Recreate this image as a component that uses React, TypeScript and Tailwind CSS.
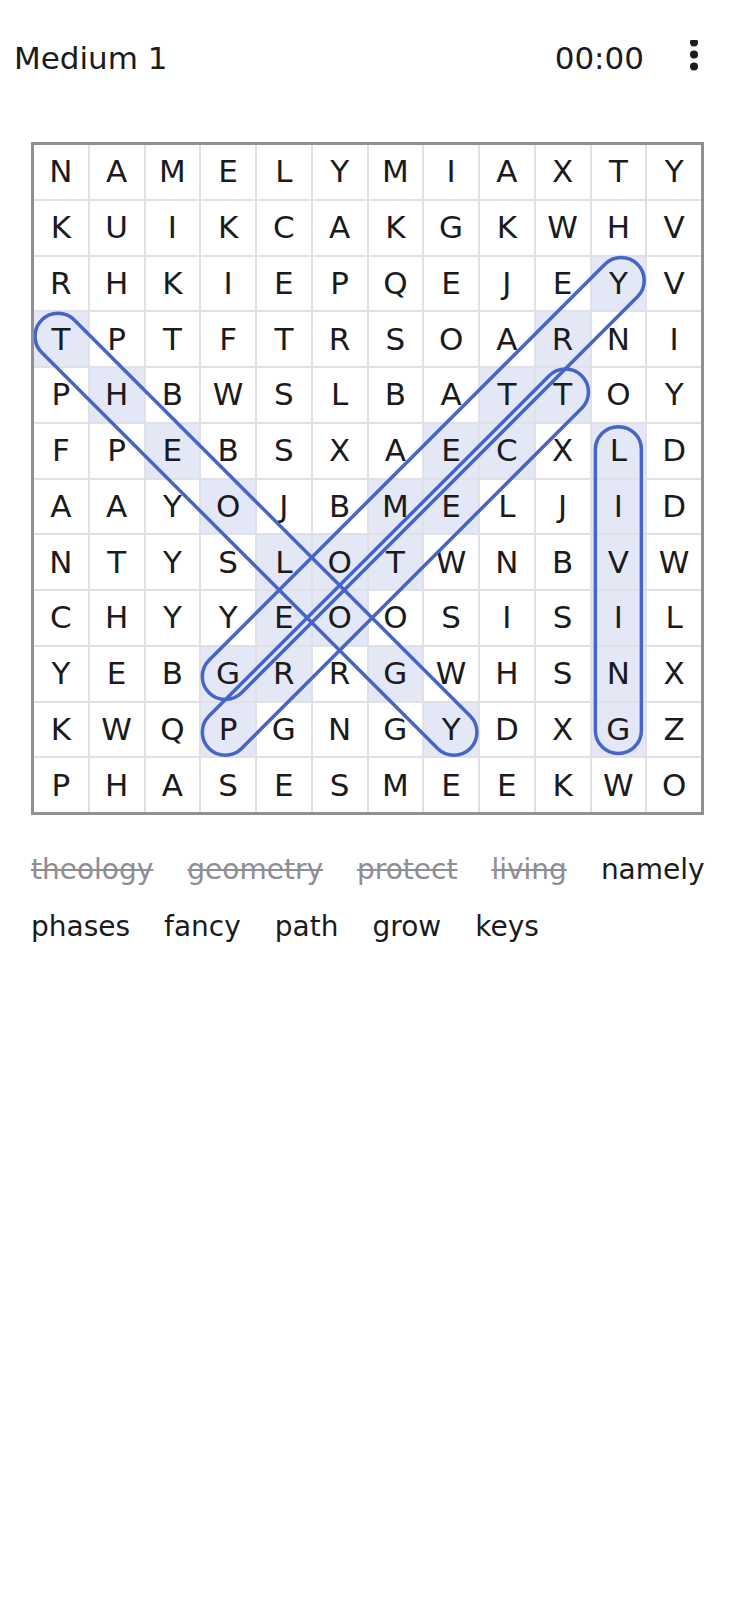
import { Fragment } from 'react';

const GRID = [
  'NAMELYMIAXTY',
  'KUIKCAKGKWHV',
  'RHKIEPQEJEYV',
  'TPTFTRSOARNI',
  'PHBWSLBATTOY',
  'FPEBSXAECXLD',
  'AAYOJBMELJID',
  'NTYSLOTWNBVW',
  'CHYYEOOSISIL',
  'YEBGRRGWHSNX',
  'KWQPGNGYDXGZ',
  'PHASESMEEKWO',
];

type Found = { word: string; from: [number, number]; to: [number, number] };

const FOUND: Found[] = [
  { word: 'theology', from: [3, 0], to: [10, 7] },
  { word: 'geometry', from: [9, 3], to: [2, 10] },
  { word: 'protect', from: [10, 3], to: [4, 9] },
  { word: 'living', from: [5, 10], to: [10, 10] },
];

const WORDS = ['theology', 'geometry', 'protect', 'living', 'namely', 'phases', 'fancy', 'path', 'grow', 'keys'];

const CELL = 53.75;
const PITCH = 55.75;
const R = 23;

const center = (i: number) => i * PITCH + CELL / 2;

function cellsOf(f: Found) {
  const [r0, c0] = f.from;
  const [r1, c1] = f.to;
  const n = Math.max(Math.abs(r1 - r0), Math.abs(c1 - c0));
  const dr = Math.sign(r1 - r0);
  const dc = Math.sign(c1 - c0);
  const out: string[] = [];
  for (let k = 0; k <= n; k++) out.push(`${r0 + dr * k}-${c0 + dc * k}`);
  return out;
}

const marked = new Set(FOUND.flatMap(cellsOf));

function Capsule({ f }: { f: Found }) {
  const x0 = center(f.from[1]);
  const y0 = center(f.from[0]);
  const x1 = center(f.to[1]);
  const y1 = center(f.to[0]);
  const len = Math.hypot(x1 - x0, y1 - y0);
  const diag = f.from[0] !== f.to[0] && f.from[1] !== f.to[1];
  const ext = diag ? 4 : 1;
  const angle = (Math.atan2(y1 - y0, x1 - x0) * 180) / Math.PI;
  return (
    <g transform={`translate(${x0} ${y0}) rotate(${angle})`}>
      <rect x={-R - ext} y={-R} width={len + 2 * R + 2 * ext} height={2 * R} rx={R} ry={R} fill="none" stroke="#4764c9" strokeWidth={3.5} />
    </g>
  );
}

export default function App() {
  return (
    <div className="min-h-[1600px] w-full bg-white text-[#1b1b1d]" style={{ fontFamily: '"DejaVu Sans", sans-serif' }}>
      <header className="flex items-start pt-[40px]">
        <div className="pl-[14px] text-[31px] leading-[36px]">Medium 1</div>
        <div className="ml-auto text-[31px] leading-[36px]">00:00</div>
        <button className="ml-[38px] mr-[32px] w-[24px] h-[36px]" aria-label="menu">
          <svg viewBox="0 0 24 36" width="24" height="36">
            <circle cx="12" cy="2.5" r="4" fill="#1b1b1d" />
            <circle cx="12" cy="14.5" r="4" fill="#1b1b1d" />
            <circle cx="12" cy="26.5" r="4" fill="#1b1b1d" />
          </svg>
        </button>
      </header>

      <div className="ml-[31px] mt-[66px] w-[673px] h-[673px] border-[3px] border-[#8f8f94]">
        <div className="relative w-full h-full">
          <div className="grid grid-cols-12 gap-[2px] bg-[#e1e1e5] w-full h-full">
            {GRID.map((row, r) => (
              <Fragment key={r}>
                {row.split('').map((ch, c) => (
                  <div
                    key={c}
                    className={`flex items-center justify-center text-[31px] leading-none ${
                      marked.has(`${r}-${c}`) ? 'bg-[#e3e7f6]' : 'bg-white'
                    }`}
                  >
                    {ch}
                  </div>
                ))}
              </Fragment>
            ))}
          </div>
          <svg className="absolute inset-0 pointer-events-none" width="667" height="667" viewBox="0 0 667 667">
            {FOUND.map((f) => (
              <Capsule key={f.word} f={f} />
            ))}
          </svg>
        </div>
      </div>

      <div className="mt-[26px] pl-[31px] pr-[20px] flex flex-wrap gap-x-[34px] text-[28px] leading-[57px]">
        {WORDS.map((w) => {
          const done = FOUND.some((f) => f.word === w);
          return (
            <span key={w} className={done ? 'text-[#8e8e93] line-through decoration-[2px]' : 'text-[#1b1b1d]'}>
              {w}
            </span>
          );
        })}
      </div>
    </div>
  );
}
